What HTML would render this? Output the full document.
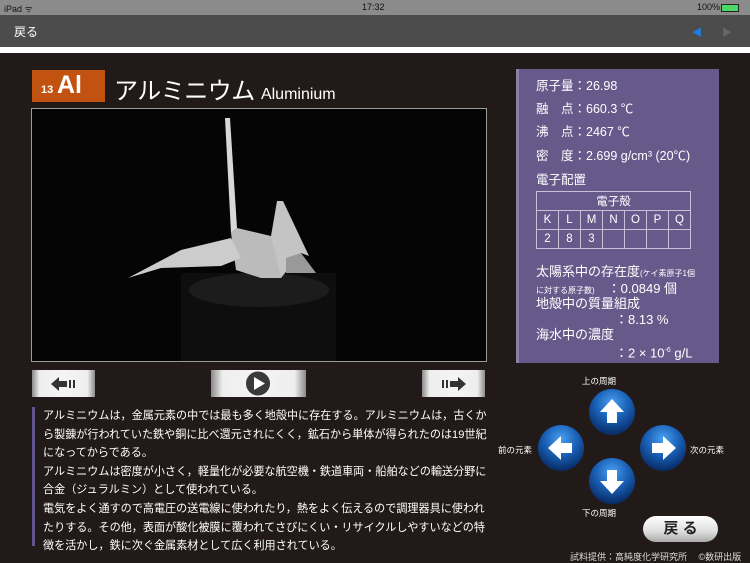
<!DOCTYPE html>
<html><head><meta charset="utf-8"><style>
*{margin:0;padding:0;box-sizing:border-box}
body{width:750px;height:562px;overflow:hidden;background:#221a19;font-family:"Liberation Sans","Noto Sans CJK JP",sans-serif;position:relative;color:#fff}
.abs{position:absolute}
#status{left:0;top:0;width:750px;height:15px;background:#8b8b8b;font-size:9px;color:#111}
#nav{left:0;top:15px;width:750px;height:32px;background:#4c4c4c}
#white{left:0;top:47px;width:750px;height:6px;background:#fff}
.btn{background:linear-gradient(90deg,#8a8a8a 0%,#eee 12%,#f4f4f4 50%,#eee 88%,#8a8a8a 100%);height:27px;top:370px}
.txt{left:43px;top:407px;width:470px;font-size:11.1px;line-height:18.6px;color:#fff;white-space:nowrap}
.panel{left:516px;top:69px;width:203px;height:294px;background:#675a8b;border-left:3px solid #8a7fa8}
.panel div{position:absolute;font-size:12.5px;line-height:15px;color:#fff;white-space:nowrap}
.panel .b{font-size:13px}
table{border-collapse:collapse;position:absolute;left:17px;top:122px}
td{border:1px solid #c8c2d8;width:22px;height:19px;text-align:center;font-size:11.5px;color:#fff}
.circ{width:46px;height:46px;border-radius:50%;background:radial-gradient(circle at 50% 30%,#4aa0f0 0%,#1a62b8 40%,#0a3270 75%,#061a40 100%)}
.lbl{font-size:8.5px;color:#fff}
</style></head><body>
<div class="abs" id="status"><span class="abs" style="left:4px;top:2px">iPad ᯤ</span><span class="abs" style="left:362px;top:2px">17:32</span><span class="abs" style="left:697px;top:2px">100%</span><span class="abs" style="left:721px;top:4px;width:18px;height:8px;background:#4cd964;border:1px solid #222"></span></div>
<div class="abs" id="nav"><span class="abs" style="left:14px;top:8px;font-size:12px;color:#fff">戻る</span><span class="abs" style="left:692px;top:9px;font-size:10px;color:#1a7fe8">◀</span><span class="abs" style="left:722px;top:9px;font-size:10px;color:#666">▶</span></div>
<div class="abs" id="white"></div>

<div class="abs" style="left:32px;top:70px;width:73px;height:32px;background:#c2520f"></div>
<div class="abs" style="left:41px;top:84px;font-size:11px;font-weight:bold">13</div>
<div class="abs" style="left:57px;top:71px;font-size:25px;font-weight:bold">Al</div>
<div class="abs" style="left:114px;top:71px;font-size:24px;letter-spacing:-0.5px">アルミニウム <span style="font-size:16px;letter-spacing:0">Aluminium</span></div>

<svg class="abs" style="left:31px;top:108px" width="456" height="254">
<rect x="0.5" y="0.5" width="455" height="253" fill="#050505" stroke="#9a9a9a"/>
<rect x="150" y="165" width="155" height="88" fill="#0e0e0e"/>
<ellipse cx="228" cy="182" rx="70" ry="17" fill="#1c1c1c"/>
<polygon points="194,10 199,10 206,120 200,125" fill="#d8d8d8"/>
<polygon points="200,125 206,120 240,128 255,150 250,170 230,170 205,162" fill="#bbb"/>
<polygon points="97,170 150,142 200,130 210,150 190,158 130,160" fill="#ccc"/>
<polygon points="240,128 246,93 252,93 278,148 270,145 250,170" fill="#c4c4c4"/>
<polygon points="255,150 270,145 285,165 255,165" fill="#999"/>
</svg>

<div class="abs btn" style="left:32px;width:63px"><svg width="63" height="27"><polygon points="19,14 27,7 27,11 35,11 35,17 27,17 27,21" fill="#333"/><rect x="37" y="10" width="2" height="8" fill="#333"/><rect x="41" y="10" width="2" height="8" fill="#333"/></svg></div>
<div class="abs btn" style="left:211px;width:95px"><svg width="95" height="27"><circle cx="47" cy="13.5" r="12" fill="#3a3a3a"/><polygon points="43,7 43,20 54,13.5" fill="#fff"/></svg></div>
<div class="abs btn" style="left:422px;width:63px"><svg width="63" height="27"><rect x="20" y="10" width="2" height="8" fill="#333"/><rect x="24" y="10" width="2" height="8" fill="#333"/><polygon points="28,11 36,11 36,7 44,14 36,21 36,17 28,17" fill="#333"/></svg></div>

<div class="abs" style="left:32px;top:407px;width:3px;height:139px;background:#5f5490"></div>
<div class="abs txt">アルミニウムは，金属元素の中では最も多く地殻中に存在する。アルミニウムは，古くか<br>ら製錬が行われていた鉄や銅に比べ還元されにくく，鉱石から単体が得られたのは19世紀<br>になってからである。<br>アルミニウムは密度が小さく，軽量化が必要な航空機・鉄道車両・船舶などの輸送分野に<br>合金（ジュラルミン）として使われている。<br>電気をよく通すので高電圧の送電線に使われたり，熱をよく伝えるので調理器具に使われ<br>たりする。その他，表面が酸化被膜に覆われてさびにくい・リサイクルしやすいなどの特<br>徴を活かし，鉄に次ぐ金属素材として広く利用されている。</div>

<div class="abs panel">
<div style="left:17px;top:10px">原子量：26.98</div>
<div style="left:17px;top:33px">融　点：660.3 ℃</div>
<div style="left:17px;top:56px">沸　点：2467 ℃</div>
<div style="left:17px;top:80px">密　度：2.699 g/cm³ (20℃)</div>
<div style="left:17px;top:104px">電子配置</div>
<table><tr><td colspan="7">電子殻</td></tr><tr><td>K</td><td>L</td><td>M</td><td>N</td><td>O</td><td>P</td><td>Q</td></tr><tr><td>2</td><td>8</td><td>3</td><td></td><td></td><td></td><td></td></tr></table>
<div class="b" style="left:17px;top:195px">太陽系中の存在度<span style="font-size:8px">(ケイ素原子1個</span></div>
<div class="b" style="left:17px;top:212px"><span style="font-size:8px">に対する原子数)</span>　：0.0849 個</div>
<div class="b" style="left:17px;top:227px">地殻中の質量組成</div>
<div class="b" style="left:96px;top:243px">：8.13 %</div>
<div class="b" style="left:17px;top:258px">海水中の濃度</div>
<div class="b" style="left:96px;top:274px">：2 × 10<sup style="font-size:7px">-6</sup> g/L</div>
</div>

<div class="abs lbl" style="left:582px;top:375px">上の周期</div>
<div class="abs lbl" style="left:498px;top:444px">前の元素</div>
<div class="abs lbl" style="left:690px;top:444px">次の元素</div>
<div class="abs lbl" style="left:582px;top:507px">下の周期</div>
<div class="abs circ" style="left:589px;top:389px"><svg width="46" height="46"><polygon points="23,10 35,23 28,23 28,34 18,34 18,23 11,23" fill="#fff"/></svg></div>
<div class="abs circ" style="left:538px;top:425px"><svg width="46" height="46"><polygon points="10,23 23,11 23,18 34,18 34,28 23,28 23,35" fill="#fff"/></svg></div>
<div class="abs circ" style="left:640px;top:425px"><svg width="46" height="46"><polygon points="36,23 23,11 23,18 12,18 12,28 23,28 23,35" fill="#fff"/></svg></div>
<div class="abs circ" style="left:589px;top:458px"><svg width="46" height="46"><polygon points="23,36 35,23 28,23 28,12 18,12 18,23 11,23" fill="#fff"/></svg></div>

<div class="abs" style="left:643px;top:516px;width:75px;height:26px;border-radius:13px;background:linear-gradient(#fff,#ddd 60%,#aaa);color:#222;font-size:15px;text-align:center;line-height:26px;font-weight:bold">戻 る</div>
<div class="abs" style="left:570px;top:550px;font-size:9px;color:#ddd">試料提供：高純度化学研究所　 ©数研出版</div>
</body></html>
